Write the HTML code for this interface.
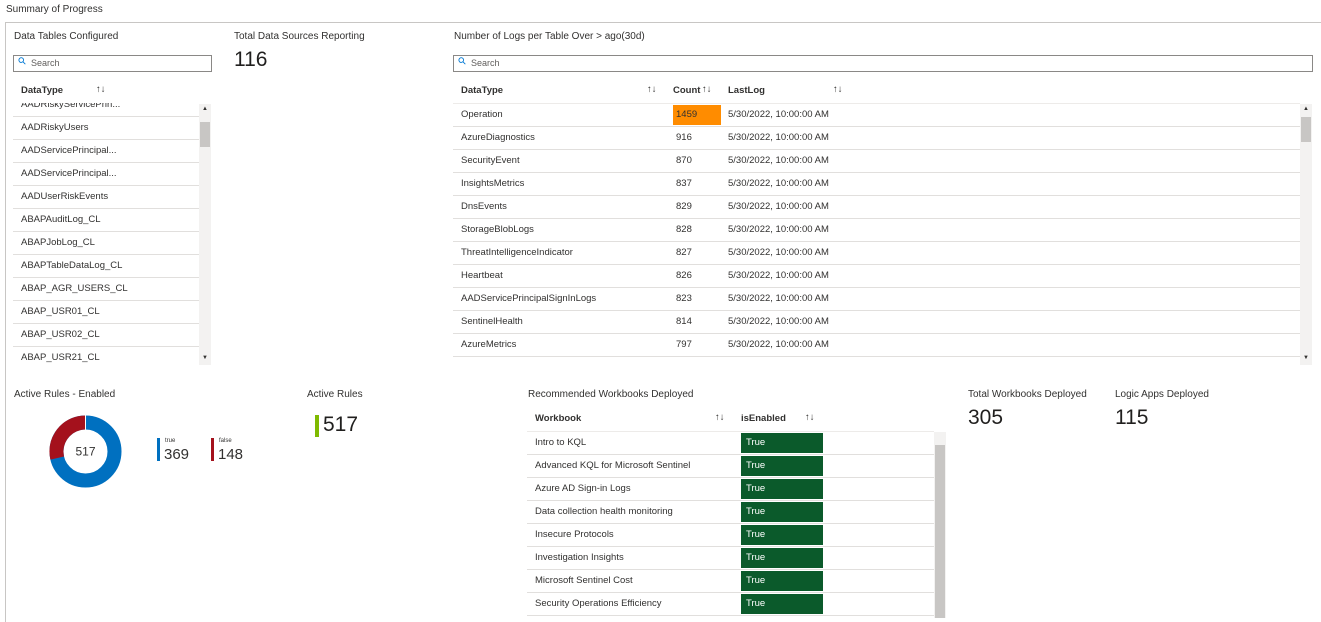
<!DOCTYPE html>
<html><head><meta charset="utf-8"><style>
*{box-sizing:border-box;margin:0;padding:0}
body{width:1321px;height:618px;overflow:hidden;background:#fff;font-family:"Liberation Sans",sans-serif;color:#323130;position:relative;font-size:9.5px}
.a{position:absolute;white-space:nowrap}
.t{font-size:10px;color:#323130}
.big{font-size:21px;color:#201f1e}
.srch{position:absolute;height:17px;border:1px solid #8a8886;font-size:9px;color:#605e5c;padding:2px 0 0 17px}
.srch:before{content:"⚲";position:absolute;left:5px;top:0;color:#0078d4;font-size:10px;transform:rotate(-45deg)}
.row{position:absolute;height:23px;border-bottom:1px solid #e1dfdd;font-size:9.5px;line-height:22px}
.hd{font-size:9.5px;font-weight:bold;color:#323130}
.sb{position:absolute;background:#f3f2f1}
.th{position:absolute;background:#c8c6c4}
.tr{position:absolute;background:#0b5a2b;color:#fff;height:20px;width:82px;padding-left:5px;line-height:20px;font-size:9.5px}
</style></head><body>
<div class="a t" style="left:6px;top:4px">Summary of Progress</div>
<div class="a" style="left:5px;top:22px;width:1320px;height:600px;border-top:1px solid #c8c6c4;border-left:1px solid #c8c6c4"></div>

<div class="a t" style="left:14px;top:31px">Data Tables Configured</div>
<div class="srch" style="left:13px;top:55px;width:199px">Search</div>
<div class="a hd" style="left:21px;top:85px">DataType</div><div class="a" style="left:96px;top:84px">↑↓</div>
<div class="a" style="left:13px;top:103px;width:186px;height:262px;overflow:hidden">
<div style="position:relative;top:-9px">
<div class="row" style="position:relative;padding-left:8px">AADRiskyServicePrin...</div>
<div class="row" style="position:relative;padding-left:8px">AADRiskyUsers</div>
<div class="row" style="position:relative;padding-left:8px">AADServicePrincipal...</div>
<div class="row" style="position:relative;padding-left:8px">AADServicePrincipal...</div>
<div class="row" style="position:relative;padding-left:8px">AADUserRiskEvents</div>
<div class="row" style="position:relative;padding-left:8px">ABAPAuditLog_CL</div>
<div class="row" style="position:relative;padding-left:8px">ABAPJobLog_CL</div>
<div class="row" style="position:relative;padding-left:8px">ABAPTableDataLog_CL</div>
<div class="row" style="position:relative;padding-left:8px">ABAP_AGR_USERS_CL</div>
<div class="row" style="position:relative;padding-left:8px">ABAP_USR01_CL</div>
<div class="row" style="position:relative;padding-left:8px">ABAP_USR02_CL</div>
<div class="row" style="position:relative;padding-left:8px">ABAP_USR21_CL</div>
</div></div>
<div class="sb" style="left:199px;top:104px;width:12px;height:261px"></div>
<div class="th" style="left:200px;top:122px;width:10px;height:25px"></div>
<div class="a" style="left:202px;top:106px;font-size:6px">▲</div><div class="a" style="left:202px;top:355px;font-size:6px">▼</div>

<div class="a t" style="left:234px;top:31px">Total Data Sources Reporting</div>
<div class="a big" style="left:234px;top:48px">116</div>

<div class="a t" style="left:454px;top:31px">Number of Logs per Table Over &gt; ago(30d)</div>
<div class="srch" style="left:453px;top:55px;width:860px">Search</div>
<div class="a hd" style="left:461px;top:85px">DataType</div><div class="a" style="left:647px;top:84px">↑↓</div>
<div class="a hd" style="left:673px;top:85px">Count</div><div class="a" style="left:702px;top:84px">↑↓</div>
<div class="a hd" style="left:728px;top:85px">LastLog</div><div class="a" style="left:833px;top:84px">↑↓</div>
<div class="a" style="left:453px;top:103px;width:847px;border-top:1px solid #edebe9"></div>
<div class="a" style="left:673px;top:105px;width:48px;height:20px;background:#ff8c00"></div>
<div id="rt"></div>
<div class="sb" style="left:1300px;top:104px;width:12px;height:261px"></div>
<div class="th" style="left:1301px;top:117px;width:10px;height:25px"></div>
<div class="a" style="left:1303px;top:106px;font-size:6px">▲</div><div class="a" style="left:1303px;top:355px;font-size:6px">▼</div>

<div class="a t" style="left:14px;top:389px">Active Rules - Enabled</div>
<svg class="a" style="left:49px;top:415px" width="73" height="73" viewBox="-36.5 -36.5 73 73">
<circle r="29" fill="none" stroke="#0070c0" stroke-width="14"/>
<circle r="29" fill="none" stroke="#a4111c" stroke-width="14" stroke-dasharray="52.1 200" transform="rotate(-193)"/>
<line x1="0" y1="-36" x2="0" y2="-22" stroke="#fff" stroke-width="1"/>
<text x="0" y="4" text-anchor="middle" font-size="12" font-family="Liberation Sans" fill="#323130">517</text></svg>
<div class="a" style="left:157px;top:438px;width:3px;height:23px;background:#0070c0"></div>
<div class="a" style="left:165px;top:438px;font-size:6px">true</div><div class="a" style="left:164px;top:446px;font-size:15px">369</div>
<div class="a" style="left:211px;top:438px;width:3px;height:23px;background:#a4111c"></div>
<div class="a" style="left:219px;top:438px;font-size:6px">false</div><div class="a" style="left:218px;top:446px;font-size:15px">148</div>

<div class="a t" style="left:307px;top:389px">Active Rules</div>
<div class="a" style="left:315px;top:415px;width:4px;height:22px;background:#7fba00"></div>
<div class="a big" style="left:323px;top:413px">517</div>

<div class="a t" style="left:528px;top:389px">Recommended Workbooks Deployed</div>
<div class="a hd" style="left:535px;top:413px">Workbook</div><div class="a" style="left:715px;top:412px">↑↓</div>
<div class="a hd" style="left:741px;top:413px">isEnabled</div><div class="a" style="left:805px;top:412px">↑↓</div>
<div class="a" style="left:527px;top:431px;width:407px;border-top:1px solid #edebe9"></div>
<div id="wb"></div>
<div class="sb" style="left:934px;top:432px;width:12px;height:186px"></div>
<div class="th" style="left:935px;top:445px;width:10px;height:173px"></div>

<div class="a t" style="left:968px;top:389px">Total Workbooks Deployed</div>
<div class="a big" style="left:968px;top:406px">305</div>
<div class="a t" style="left:1115px;top:389px">Logic Apps Deployed</div>
<div class="a big" style="left:1115px;top:406px">115</div>

<script>
var r=[["Operation",1459],["AzureDiagnostics",916],["SecurityEvent",870],["InsightsMetrics",837],["DnsEvents",829],["StorageBlobLogs",828],["ThreatIntelligenceIndicator",827],["Heartbeat",826],["AADServicePrincipalSignInLogs",823],["SentinelHealth",814],["AzureMetrics",797]];
var h="";r.forEach(function(x,i){var y=104+i*23;h+='<div class="row" style="left:453px;top:'+y+'px;width:847px"><span class="a" style="left:8px">'+x[0]+'</span><span class="a" style="left:223px">'+x[1]+'</span><span class="a" style="left:275px">5/30/2022, 10:00:00 AM</span></div>';});
document.getElementById("rt").outerHTML=h;
var w=["Intro to KQL","Advanced KQL for Microsoft Sentinel","Azure AD Sign-in Logs","Data collection health monitoring","Insecure Protocols","Investigation Insights","Microsoft Sentinel Cost","Security Operations Efficiency"];
h="";w.forEach(function(x,i){var y=432+i*23;h+='<div class="row" style="left:527px;top:'+y+'px;width:407px"><span class="a" style="left:8px">'+x+'</span></div><div class="tr" style="left:741px;top:'+(y+1)+'px">True</div>';});
document.getElementById("wb").outerHTML=h;
</script>
</body></html>
